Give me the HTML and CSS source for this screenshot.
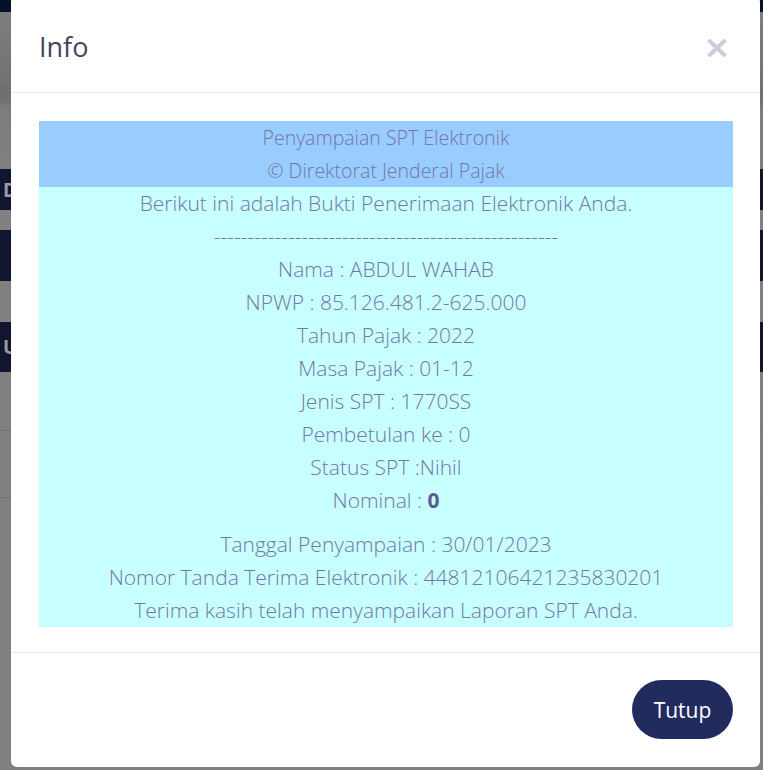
FILE: index.html
```html
<!DOCTYPE html>
<html lang="id">
<head>
<meta charset="utf-8">
<title>Info</title>
<link rel="stylesheet" href="styles.css">
</head>
<body>
<div class="page">
  <div class="band band-top"></div>
  <div class="gap gap-1"></div>
  <div class="band band-d"><span class="band-text">DAFTAR</span></div>
  <div class="gap gap-2"></div>
  <div class="band band-mid"></div>
  <div class="gap gap-3"></div>
  <div class="band band-u"><span class="band-text">UNDUH</span></div>
  <div class="row-line row-1"></div>
  <div class="row-line row-2"></div>
</div>

<div class="modal">
  <div class="modal-header">
    <h4 class="modal-title">Info</h4>
    <button class="close" type="button" aria-label="Close">
      <svg width="22" height="20" viewBox="0 0 22 20"><path d="M2.5 2 L19.5 18 M19.5 2 L2.5 18" stroke="currentColor" stroke-width="4.2" fill="none"/></svg>
    </button>
  </div>
  <div class="modal-body">
    <div class="receipt">
      <div class="receipt-head">
        <div class="line">Penyampaian SPT Elektronik</div>
        <div class="line">© Direktorat Jenderal Pajak</div>
      </div>
      <div class="receipt-main">
        <div class="line">Berikut ini adalah Bukti Penerimaan Elektronik Anda.</div>
        <div class="line">---------------------------------------------------</div>
        <div class="line">Nama : ABDUL WAHAB</div>
        <div class="line">NPWP : 85.126.481.2-625.000</div>
        <div class="line">Tahun Pajak : 2022</div>
        <div class="line">Masa Pajak : 01-12</div>
        <div class="line">Jenis SPT : 1770SS</div>
        <div class="line">Pembetulan ke : 0</div>
        <div class="line">Status SPT :Nihil</div>
        <div class="line">Nominal : <b class="strong">0</b></div>
      </div>
      <div class="receipt-foot">
        <div class="line">Tanggal Penyampaian : 30/01/2023</div>
        <div class="line">Nomor Tanda Terima Elektronik : 44812106421235830201</div>
        <div class="line">Terima kasih telah menyampaikan Laporan SPT Anda.</div>
      </div>
    </div>
  </div>
  <div class="modal-footer">
    <button class="btn" type="button">Tutup</button>
  </div>
</div>
</body>
</html>
```

FILE: styles.css
```css
html, body {
  margin: 0;
  padding: 0;
}
body {
  width: 763px;
  height: 770px;
  overflow: hidden;
  background: #808080;
  font-family: "Open Sans", "Noto Sans", sans-serif;
  position: relative;
}
.page {
  display: flex;
  flex-direction: column;
}
.band {
  background: #11152f;
  display: flex;
  align-items: center;
}
.band-top { height: 12px; background: #031129; }
.gap-1 { height: 157px; background: linear-gradient(#7e7e7e 0, #6f6f6f 88px, #7c7c7c 96px, #808080 100%); }
.band-d { height: 41px; }
.gap-2 { height: 20px; }
.band-mid { height: 51px; }
.gap-3 { height: 41px; }
.band-u { height: 50px; }
.band-text {
  padding-left: 3px;
  font-weight: 700;
  font-size: 19px;
  color: #9a9ba3;
  letter-spacing: 1px;
}
.row-line { border-bottom: 1px solid #747474; }
.row-1 { height: 58px; }
.row-2 { height: 66px; }

.modal {
  position: absolute;
  left: 11px;
  top: -4px;
  width: 749px;
  height: 771px;
  background: #fff;
  border-radius: 6px;
  display: flex;
  flex-direction: column;
  box-sizing: border-box;
}
.modal-header {
  height: 97px;
  box-sizing: border-box;
  border-bottom: 1px solid #e9e9ef;
  display: flex;
  align-items: center;
  justify-content: space-between;
  padding: 4px 32px 0 28px;
}
.modal-title {
  margin: 0;
  font-size: 27px;
  font-weight: 400;
  color: #45455a;
  line-height: 1;
}
.close {
  border: 0;
  background: none;
  padding: 0;
  color: #cdcedb;
  display: flex;
  margin-top: 4px;
}
.modal-body {
  padding: 28px 27px 25px 28px;
}
.receipt {
  background: #c8ffff;
  text-align: center;
  color: #7476a4;
  font-weight: 300;
  font-size: 21px;
}
.receipt-head {
  background: #99ccff;
  font-size: 19.5px;
}
.line {
  line-height: 33px;
  height: 33px;
  white-space: nowrap;
}
.receipt-foot {
  margin-top: 11px;
}
.strong {
  font-weight: 700;
  color: #5b5d8f;
}
.modal-footer {
  border-top: 1px solid #e9e9ef;
  display: flex;
  justify-content: flex-end;
  padding: 27px 27px 0 28px;
}
.btn {
  height: 59px;
  width: 101px;
  border: 0;
  border-radius: 30px;
  background: #222b5e;
  color: #fff;
  font-family: "Open Sans", "Noto Sans", sans-serif;
  font-size: 21px;
  font-weight: 400;
  padding: 0;
}
```
